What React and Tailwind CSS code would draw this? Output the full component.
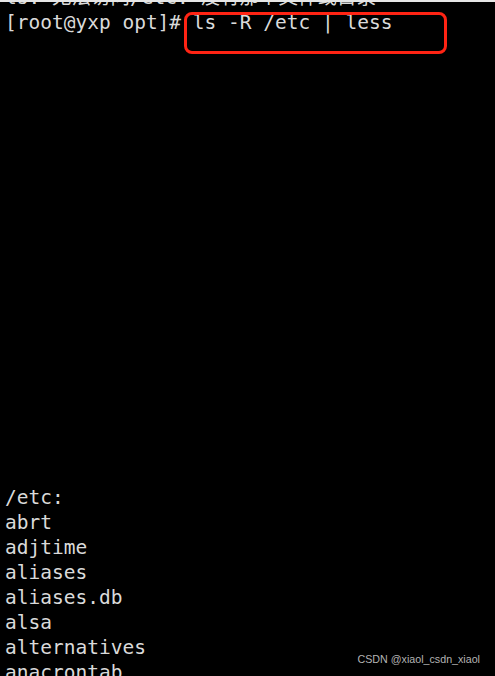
import React from "react";

const listing = [
    "/etc:",
    "abrt",
    "adjtime",
    "aliases",
    "aliases.db",
    "alsa",
    "alternatives",
    "anacrontab",
];

const App = () => {
    return (
        <div className="relative w-[495px] h-[676px] overflow-hidden bg-black border-t-2 border-[#e6e6e6]">
            <div
                className="pl-[5px] text-[19.5px] leading-[25px] text-[#dadada] whitespace-pre"
                style={{ fontFamily: '"DejaVu Sans Mono", "Noto Sans CJK SC", monospace' }}
            >
                <div className="-mt-[17px]">ls: 无法访问/etc: 没有那个文件或目录</div>
                <div className="relative">
                    [root@yxp opt]# ls -R /etc | less
                    <div className="absolute left-[179px] top-[2px] w-[263px] h-[42px] border-[3.5px] border-[#ff2414] rounded-[8px]" />
                </div>
                <div className="mt-[450px]">
                    {listing.map((line, i) => (
                        <div key={i}>{line}</div>
                    ))}
                </div>
            </div>
            <div
                className="absolute right-[15px] bottom-[9px] text-[10.7px] text-[#b4b4b4]"
                style={{ fontFamily: '"Liberation Sans", Arial, sans-serif' }}
            >
                CSDN @xiaol_csdn_xiaol
            </div>
        </div>
    );
};

export default App;
